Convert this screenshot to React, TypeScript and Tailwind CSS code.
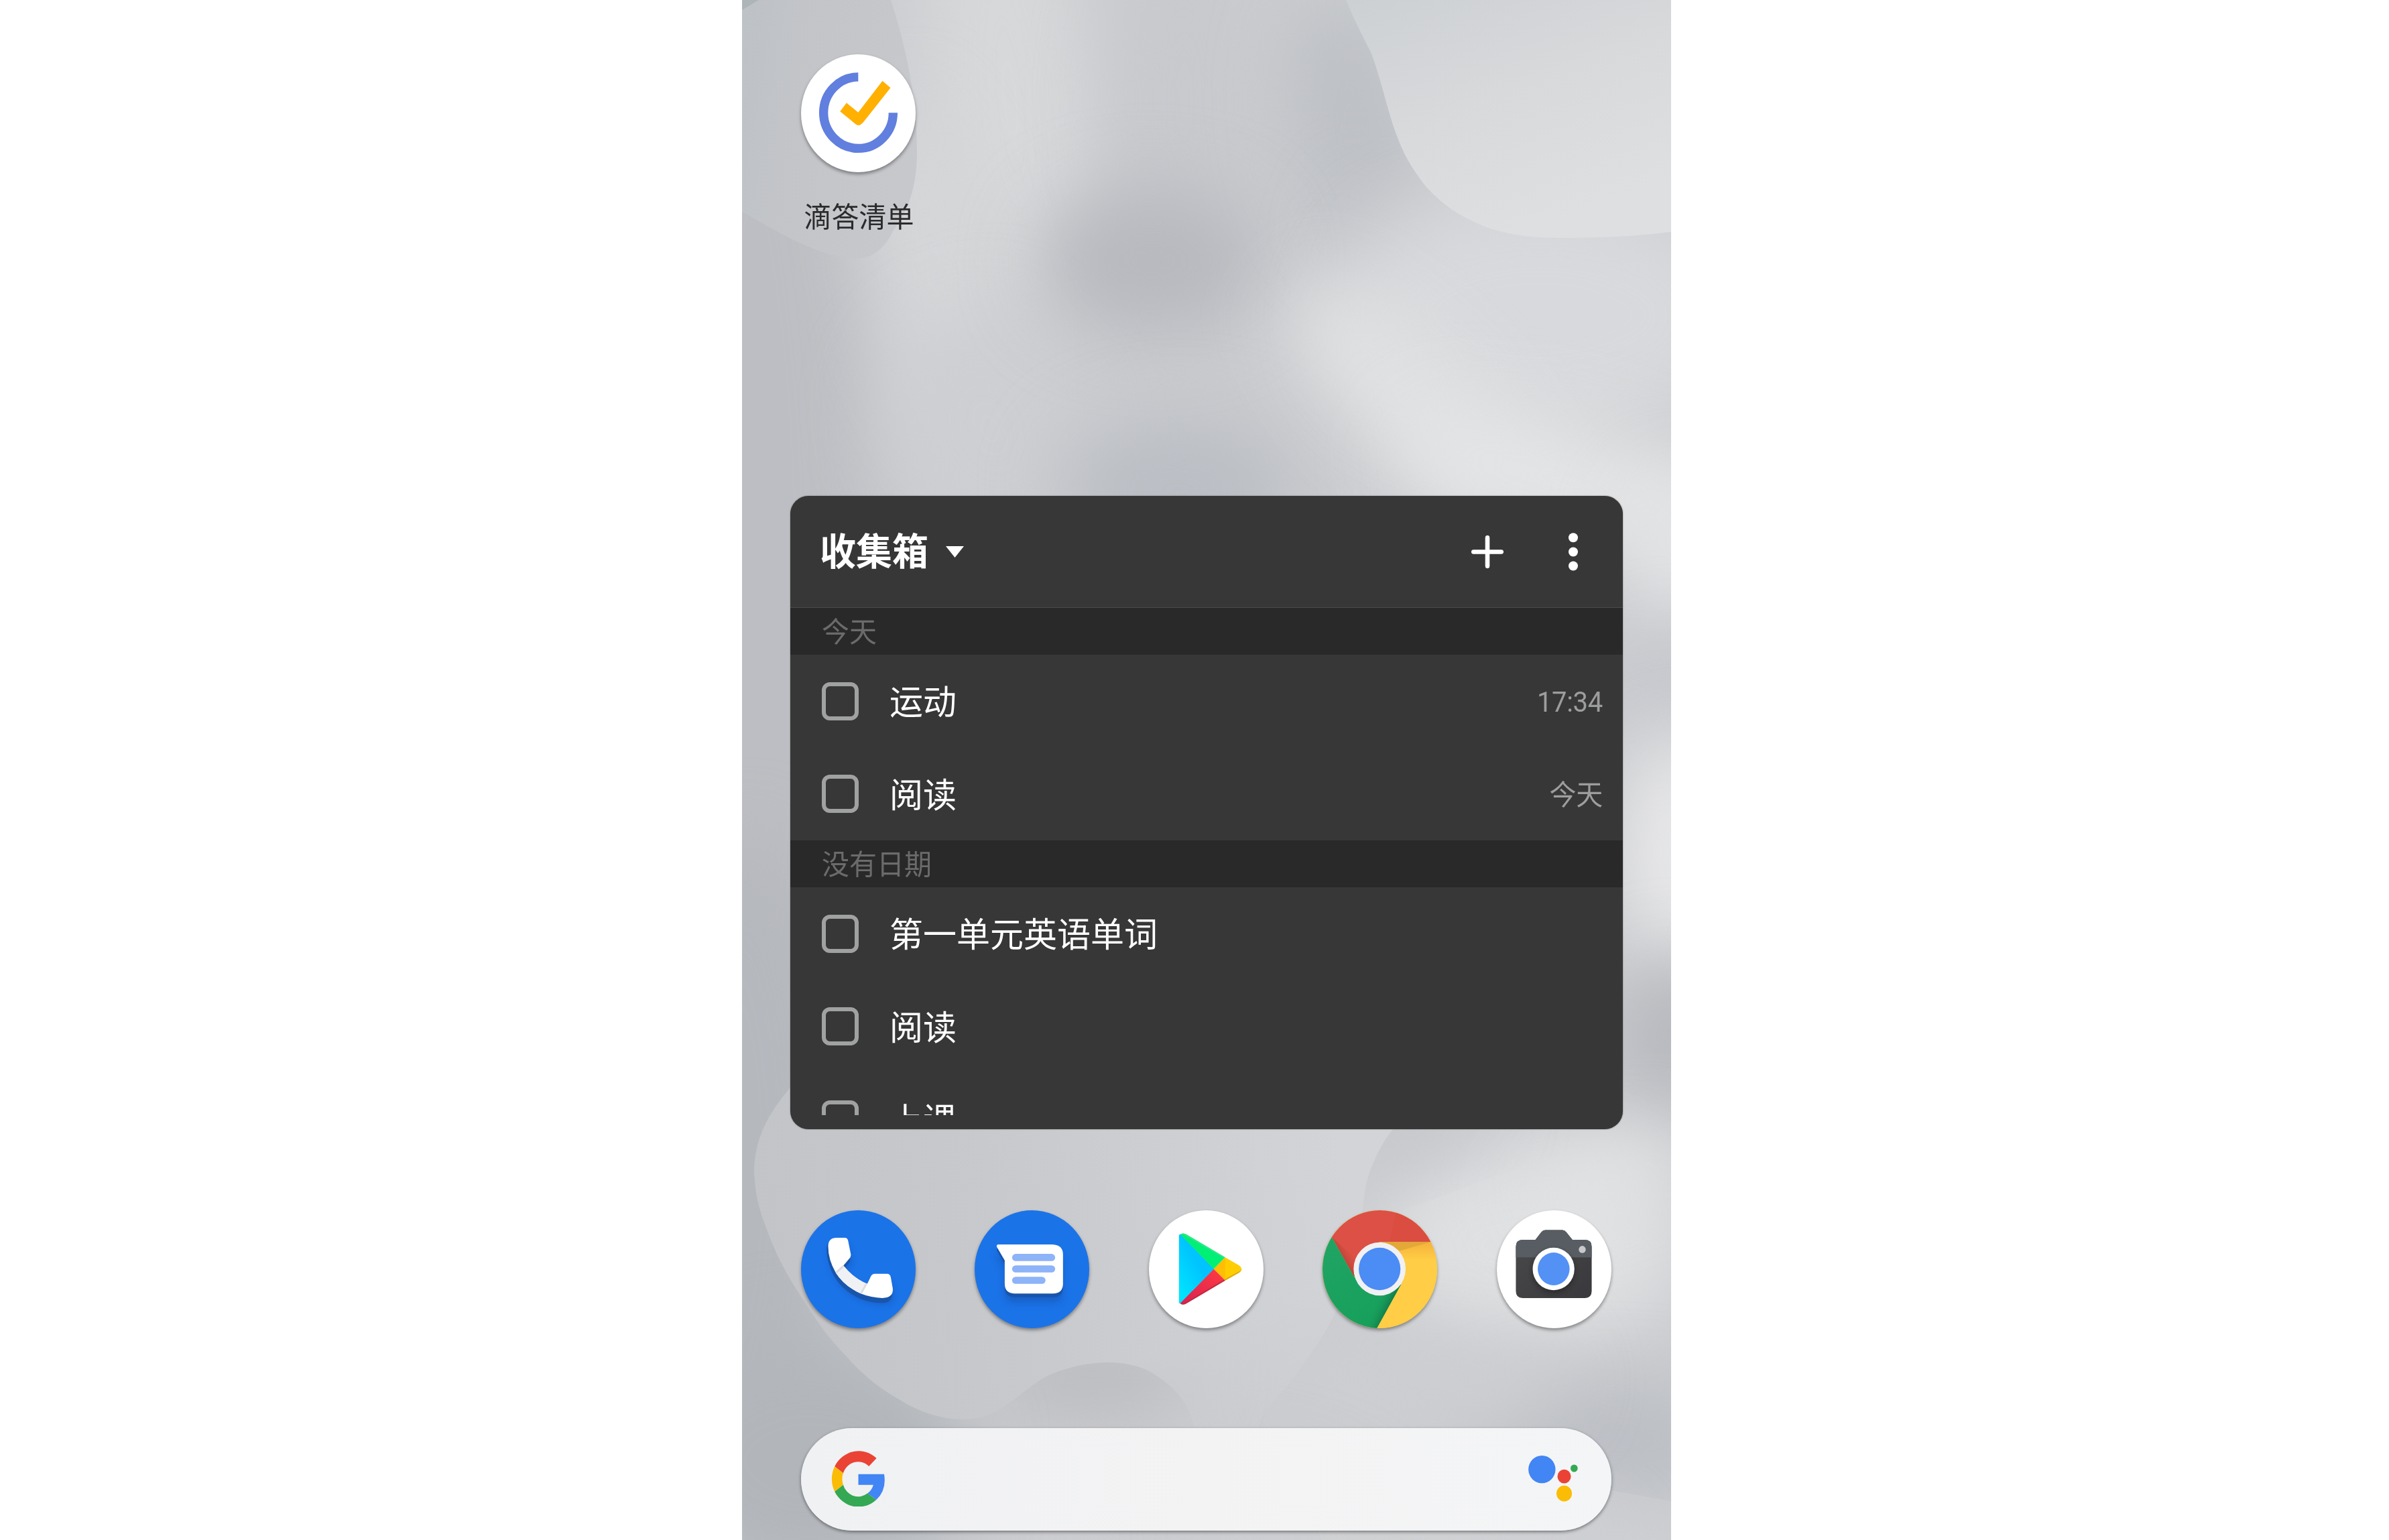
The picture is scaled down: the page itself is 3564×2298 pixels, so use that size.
import type { ReactNode } from "react";

const FONT = "font-['Roboto','Noto_Sans_CJK_SC',sans-serif]";

type Blob = [cx: number, cy: number, rx: number, ry: number, color: string, rotate?: number, opacity?: number];

const BLOBS: Blob[] = [
  [20, 900, 190, 900, "#bdbec3"],
  [0, 1750, 160, 500, "#b5b8bd"],
  [400, 150, 130, 330, "#d7d8da", -6],
  [290, 400, 80, 260, "#d6d7d9", -12],
  [370, 640, 150, 180, "#cdcfd2", -20],
  [660, 150, 110, 260, "#c8c9cd"],
  [910, 190, 90, 200, "#bdc0c5", -8],
  [1040, 370, 160, 50, "#cccdd1", 20],
  [610, 390, 170, 110, "#b8b9bf"],
  [650, 730, 180, 110, "#bbbec4"],
  [1190, 470, 300, 180, "#d8d9dc"],
  [1000, 600, 240, 80, "#e1e2e3", 44],
  [1230, 720, 260, 90, "#e4e5e6", 14],
  [1400, 820, 80, 110, "#e3e4e6"],
  [1400, 1030, 80, 80, "#c5c7cd"],
  [1400, 1270, 90, 180, "#e8e8e9"],
  [1395, 1550, 90, 120, "#b6b8bd"],
  [1180, 1860, 230, 150, "#dfe0e2"],
  [1290, 1760, 130, 60, "#e2e3e4", -20],
  [1000, 1690, 120, 40, "#c4c6ca", -20],
  [1300, 2150, 220, 80, "#bbbec4"],
  [1030, 2060, 200, 70, "#cdced1"],
  [620, 2260, 300, 90, "#cbccd0"],
  [520, 2050, 150, 60, "#b9babf"],
  [100, 2180, 240, 190, "#b2b6bb"],
  [1000, 2290, 330, 40, "#d0d1d4"],
];

function Wallpaper() {
  return (
    <svg className="absolute inset-0 h-full w-full" viewBox="0 0 1386 2298" preserveAspectRatio="none" aria-hidden="true">
      <defs>
        <filter id="soft" x="-80%" y="-80%" width="260%" height="260%" colorInterpolationFilters="sRGB">
          <feGaussianBlur stdDeviation="54" />
        </filter>
        <linearGradient id="leafTopLeft" x1="0" y1="0" x2="1" y2="0.25">
          <stop offset="0" stopColor="#bdc2c6" />
          <stop offset="0.5" stopColor="#c4c5c9" />
          <stop offset="1" stopColor="#c6c8cc" />
        </linearGradient>
        <linearGradient id="leafTopRight" x1="0" y1="0" x2="0.5" y2="1">
          <stop offset="0" stopColor="#cdd0d3" />
          <stop offset="0.5" stopColor="#d7d9db" />
          <stop offset="1" stopColor="#dedfe1" />
        </linearGradient>
        <linearGradient id="leafBottom" gradientUnits="userSpaceOnUse" x1="40" y1="1900" x2="900" y2="1750">
          <stop offset="0" stopColor="#c3c4c8" />
          <stop offset="0.4" stopColor="#c7c9cc" />
          <stop offset="1" stopColor="#d2d4d7" />
        </linearGradient>
        <linearGradient id="leafFade" gradientUnits="userSpaceOnUse" x1="700" y1="1980" x2="760" y2="2130">
          <stop offset="0" stopColor="#fff" />
          <stop offset="1" stopColor="#fff" stopOpacity="0.3" />
        </linearGradient>
        <mask id="leafMask">
          <rect width="1386" height="2298" fill="url(#leafFade)" />
        </mask>
      </defs>
      <rect width="1386" height="2298" fill="#cbcdd0" />
      {BLOBS.map(([cx, cy, rx, ry, color, rotate = 0, opacity = 1], i) => (
        <ellipse
          key={i}
          cx={cx}
          cy={cy}
          rx={rx}
          ry={ry}
          fill={color}
          opacity={opacity}
          filter="url(#soft)"
          transform={`rotate(${rotate} ${cx} ${cy})`}
        />
      ))}
      <path
        d="M0 0H222C245 70 261 150 261 226C261 270 252 310 225 345C210 378 185 388 165 386C110 380 60 350 0 316Z"
        fill="url(#leafTopLeft)"
      />
      <path d="M0 0H25L0 15Z" fill="#aeb5b9" />
      <path
        d="M901 0C917 38 928 58 939 80C948 105 955 130 962 156C970 185 978 208 989 231C998 248 1008 263 1020 278C1040 300 1060 315 1082 326C1108 340 1130 346 1154 350C1178 354 1198 355 1216 355C1280 355 1330 353 1386 346V0Z"
        fill="url(#leafTopRight)"
      />
      <path
        d="M72 1623C40 1660 18 1700 18 1749C20 1790 28 1810 36 1832C50 1872 68 1905 91 1939C112 1972 130 1998 154 2022C178 2050 205 2072 234 2088C262 2106 298 2118 328 2118C350 2118 364 2114 377 2107C402 2094 420 2076 439 2063C456 2051 474 2045 493 2040C512 2035 530 2033 548 2033C570 2033 592 2038 609 2047C628 2058 642 2070 654 2084C665 2100 672 2114 676 2135L760 2135L792 2092C812 2070 828 2050 841 2030C860 2004 876 1980 886 1956C908 1900 920 1850 926 1807C928 1780 930 1770 935 1753C944 1726 956 1704 971 1685V1500H100Z"
        fill="url(#leafBottom)"
        mask="url(#leafMask)"
      />
      <path d="M776 2131C815 2180 845 2235 864 2298H1386V2240Z" fill="#d4d5d8" opacity="0.35" />
    </svg>
  );
}

function AppIcon({ viewBox, className, children }: { viewBox: string; className: string; children: ReactNode }) {
  return (
    <div
      className={`h-[176px] w-[171px] shrink-0 overflow-hidden rounded-[50%] shadow-[0_3px_5px_rgba(0,0,0,0.38)] ${className}`}
    >
      <svg className="h-full w-full" viewBox={viewBox} preserveAspectRatio="none" aria-hidden="true">
        {children}
      </svg>
    </div>
  );
}

function TickIcon() {
  return (
    <AppIcon viewBox="106 65 511 527" className="bg-white">
      <path d="M361 166.500A155 159.500 0 1 0 516.500 326" fill="none" stroke="#617fde" strokeWidth="40" />
      <path d="M469 184L505 215L384 368Q371 382 363 382Q353 382 342 371L280 320L309 282L361 325Z" fill="#ffb000" />
    </AppIcon>
  );
}

const HANDSET =
  "M198 240Q198 202 236 202L272 202Q285 202 287 216L299 275Q301 286 292 295L266 326Q310 382 372 408L388 375Q394 363 406 363L460 363Q474 363 477 378L486 428Q490 470 440 471Q390 470 345 452Q270 418 232 358Q198 300 198 240Z";

function PhoneIcon() {
  return (
    <AppIcon viewBox="77 79 511 527" className="bg-[#1b73e8]">
      <defs>
        <filter id="phoneBlur" x="-30%" y="-30%" width="160%" height="160%">
          <feGaussianBlur stdDeviation="14" />
        </filter>
      </defs>
      <path d={HANDSET} transform="translate(4 30)" fill="#174ea6" opacity="0.45" filter="url(#phoneBlur)" />
      <path d={HANDSET} transform="translate(-7 12)" fill="#1855ab" />
      <path d={HANDSET} transform="translate(-4 22)" fill="#1855ab" />
      <path d={HANDSET} fill="#fff" />
      <path d="M266 326Q310 382 372 408L345 452Q270 418 232 358Z" fill="#f0f1f4" />
      <path d="M266 328L234 357M368 408L345 450" stroke="#dcdde0" strokeWidth="9" fill="none" />
    </AppIcon>
  );
}

const BUBBLE =
  "M962 232H1203Q1250 234 1250 277V410Q1248 451 1205 451H1032Q990 449 990 408V303L955 243Q952 232 962 232Z";

function MessagesIcon() {
  return (
    <AppIcon viewBox="856 79 511 527" className="bg-[#1b73e8]">
      <defs>
        <filter id="msgBlur" x="-30%" y="-30%" width="160%" height="160%">
          <feGaussianBlur stdDeviation="16" />
        </filter>
      </defs>
      <path d={BUBBLE} transform="translate(0 40)" fill="#174ea6" opacity="0.5" filter="url(#msgBlur)" />
      <path d={BUBBLE} transform="translate(0 16)" fill="#1855ab" />
      <path d={BUBBLE} fill="#fff" />
      <rect x="1023" y="274" width="192" height="32" rx="16" fill="#8db3f8" />
      <rect x="1023" y="325" width="192" height="32" rx="16" fill="#8db3f8" />
      <rect x="1023" y="376" width="149" height="32" rx="16" fill="#8db3f8" />
    </AppIcon>
  );
}

function PlayIcon() {
  return (
    <AppIcon viewBox="73 79 511 527" className="bg-white">
      <defs>
        <linearGradient id="playBlue" x1="0.7" y1="0.2" x2="0.1" y2="0.9">
          <stop offset="0" stopColor="#00c2ff" />
          <stop offset="0.3" stopColor="#00c4ff" />
          <stop offset="1" stopColor="#00e3ff" />
        </linearGradient>
        <linearGradient id="playRed" x1="1" y1="0" x2="0" y2="1">
          <stop offset="0" stopColor="#ff3b44" />
          <stop offset="1" stopColor="#d9204f" />
        </linearGradient>
      </defs>
      <path d="M207 192Q209 184 216 187L364 342L216 493Q209 498 207 492Z" fill="url(#playBlue)" />
      <path d="M213 187Q224 178 240 187L413 289L362 342Z" fill="#00f076" />
      <path d="M213 187Q224 178 240 187L413 289L408 293L238 193Q224 184 213 187Z" fill="#33e58c" />
      <path d="M413 289L470 322Q486 331 486 342Q486 351 474 358L413 393L362 342Z" fill="#ffcd00" />
      <path d="M413 289V393L362 342Z" fill="#ffbd05" />
      <path d="M413 393L240 495Q224 504 212 495L362 342Z" fill="url(#playRed)" />
      <path d="M413 393L240 495Q224 504 212 495Q226 498 238 490L408 389Z" fill="#c02a43" />
      <path d="M413 393L474 358Q486 351 486 342Q484 350 472 354L408 389Z" fill="#d9a611" />
    </AppIcon>
  );
}

function ChromeIcon() {
  return (
    <AppIcon viewBox="850 79 511 527" className="bg-[#ffcd46]">
      <defs>
        <linearGradient id="chromeRedShade" gradientUnits="userSpaceOnUse" x1="935" y1="295" x2="990" y2="262">
          <stop offset="0" stopColor="#b03f33" stopOpacity="0.9" />
          <stop offset="1" stopColor="#dd5144" stopOpacity="0" />
        </linearGradient>
        <linearGradient id="chromeYellowShade" gradientUnits="userSpaceOnUse" x1="0" y1="220" x2="0" y2="300">
          <stop offset="0" stopColor="#f5b13b" />
          <stop offset="1" stopColor="#ffcd46" />
        </linearGradient>
        <linearGradient id="chromeGreenShade" gradientUnits="userSpaceOnUse" x1="1142" y1="515" x2="1088" y2="488">
          <stop offset="0" stopColor="#12804a" />
          <stop offset="1" stopColor="#19a15f" stopOpacity="0" />
        </linearGradient>
        <linearGradient id="chromeGreen" x1="0" y1="0" x2="0.3" y2="1">
          <stop offset="0" stopColor="#23a566" />
          <stop offset="1" stopColor="#17a05c" />
        </linearGradient>
      </defs>
      <rect x="850" y="79" width="511" height="527" fill="#ffcd46" />
      <path d="M1100 220H1361V300H1190Z" fill="url(#chromeYellowShade)" />
      <path d="M1110 220H1334L1195 260Z" fill="#dda538" opacity="0.8" />
      <path d="M892 200L850 130V79H1361V220H1105L1105 341L990 375Z" fill="#dc5045" />
      <path d="M1180 79H1361V220H1150Z" fill="#d94b3f" opacity="0.7" />
      <path d="M892 200L1050 341L990 375Z" fill="url(#chromeRedShade)" />
      <path d="M892 200L990 375L1060 430L1200 410L1092 606H850V130Z" fill="url(#chromeGreen)" />
      <path d="M1200 410L1092 606H1050L1110 440Z" fill="url(#chromeGreenShade)" />
      <ellipse cx="1104.500" cy="341" rx="116" ry="119" fill="#f1f1f3" />
      <ellipse cx="1104.500" cy="341" rx="93" ry="95" fill="#4b8cf5" />
    </AppIcon>
  );
}

function CameraIcon() {
  return (
    <AppIcon viewBox="98 79 511 527" className="bg-white">
      <defs>
        <clipPath id="cameraTop">
          <rect x="98" y="79" width="511" height="210" />
        </clipPath>
        <linearGradient id="cameraBody" x1="0" y1="0" x2="1" y2="1">
          <stop offset="0" stopColor="#4a4a4b" />
          <stop offset="1" stopColor="#39393d" />
        </linearGradient>
        <filter id="cameraBlur" x="-30%" y="-30%" width="160%" height="160%">
          <feGaussianBlur stdDeviation="9" />
        </filter>
      </defs>
      <path
        d="M183 243Q183 211 213 211H270L296 177Q304 167 314 167H390Q400 167 408 177L435 211H491Q521 211 521 243V440Q521 471 491 471H213Q183 471 183 440Z"
        fill="url(#cameraBody)"
      />
      <path
        d="M183 243Q183 211 213 211H270L296 177Q304 167 314 167H390Q400 167 408 177L435 211H491Q521 211 521 243V440H183Z"
        fill="#575d62"
        clipPath="url(#cameraTop)"
      />
      <ellipse cx="351" cy="353" rx="95" ry="97" fill="#222" opacity="0.55" filter="url(#cameraBlur)" />
      <ellipse cx="351" cy="341" rx="93" ry="95" fill="#fff" />
      <ellipse cx="351.500" cy="341" rx="71" ry="73" fill="#5391f5" />
      <ellipse cx="479" cy="254" rx="15.500" ry="16" fill="#c8c9cd" />
    </AppIcon>
  );
}

function GoogleLogo() {
  return (
    <svg className="-mt-[3px] h-[83px] w-[80px]" viewBox="211 165 239 249" preserveAspectRatio="none" aria-hidden="true">
      <path d="M226.500 235A119 124 0 0 1 413 198L379 234A70 75 0 0 0 264.500 265Z" fill="#ea4335" />
      <path d="M226.500 235A119 124 0 0 0 226.500 347L264.500 317A70 75 0 0 1 264.500 265Z" fill="#fbbc05" />
      <path d="M226.500 347A119 124 0 0 0 412 384L373 355A70 75 0 0 1 264.500 317Z" fill="#34a853" />
      <path d="M332 269H447Q459 340 412 384L373 355Q392 341 399 317H332Z" fill="#4285f4" />
    </svg>
  );
}

function AssistantLogo() {
  return (
    <svg className="-mt-[2px] h-[69px] w-[74px]" viewBox="241 185 222 207" preserveAspectRatio="none" aria-hidden="true">
      <ellipse cx="302" cy="247" rx="60.500" ry="62" fill="#4285f4" />
      <ellipse cx="401.500" cy="278.500" rx="30" ry="31" fill="#ea4335" />
      <ellipse cx="446" cy="242" rx="16" ry="16.500" fill="#34a853" />
      <ellipse cx="401.500" cy="355" rx="34.500" ry="35.500" fill="#fbbc05" />
    </svg>
  );
}

function SectionHeader({ children }: { children: ReactNode }) {
  return (
    <div className="flex h-[70px] shrink-0 items-center bg-[#292929] pt-[4px] pl-[47px] text-[41px] leading-none text-[#6b6b6b]">
      <span className="block scale-y-[1.03]">{children}</span>
    </div>
  );
}

function TaskRow({ title, due }: { title: string; due?: string }) {
  return (
    <div className="flex h-[138.5px] shrink-0 items-center pr-[30px] pl-[47px]">
      <span className="h-[57px] w-[55px] shrink-0 rounded-[12px] border-[6px] border-[#a0a2a1]" />
      <span className="mt-[4px] ml-[46px] block scale-y-[1.03] text-[50px] leading-none text-white">{title}</span>
      {due && (
        <span className="mt-[4px] ml-auto block scale-y-[1.06] text-[40px] leading-none tracking-[-0.3px] text-[#9c9e9d]">
          {due}
        </span>
      )}
    </div>
  );
}

function TaskWidget() {
  return (
    <section className="ml-[72px] flex h-[945px] w-[1242px] flex-col overflow-hidden rounded-[27px] bg-[#373737] shadow-[0_0_2px_rgba(60,70,65,0.7)]">
      <header className="flex h-[167px] shrink-0 items-center border-b border-[#4b4b4b] pr-[67px] pl-[44px]">
        <h1 className="mt-[2px] block scale-y-[1.03] text-[54px] leading-none font-bold text-white">收集箱</h1>
        <svg className="ml-[26px] h-[17px] w-[27px]" viewBox="0 0 27 17" aria-hidden="true">
          <path d="M0 0H27L13.500 17Z" fill="#fff" />
        </svg>
        <svg className="ml-auto h-[49px] w-[48px]" viewBox="0 0 48 49" aria-hidden="true">
          <path d="M3.200 24.500H44.800M24 3.200V45.800" stroke="#fff" strokeWidth="6.600" strokeLinecap="round" />
        </svg>
        <svg className="ml-[97px] h-[57px] w-[14px]" viewBox="0 0 14 57" aria-hidden="true">
          <circle cx="7" cy="7.300" r="7" fill="#fff" />
          <circle cx="7" cy="28.500" r="7" fill="#fff" />
          <circle cx="7" cy="49.500" r="7" fill="#fff" />
        </svg>
      </header>
      <div className="flex h-[757px] flex-col overflow-hidden">
        <SectionHeader>今天</SectionHeader>
        <TaskRow title="运动" due="17:34" />
        <TaskRow title="阅读" due="今天" />
        <SectionHeader>没有日期</SectionHeader>
        <TaskRow title="第一单元英语单词" />
        <TaskRow title="阅读" />
        <TaskRow title="上课" />
      </div>
    </section>
  );
}

export default function App() {
  return (
    <main className={`flex h-[2298px] w-[3564px] overflow-hidden bg-white pl-[1107px] ${FONT}`}>
      <div className="relative h-[2298px] w-[1386px] overflow-hidden">
        <Wallpaper />
        <div className="relative flex h-full flex-col">
          <div className="mt-[81px] ml-[88px] flex w-[171px] flex-col items-center">
            <TickIcon />
            <span className="mt-[48px] ml-[2px] block h-[41px] scale-y-[1.03] text-[41px] leading-none whitespace-nowrap text-[#2b2b2c]">
              滴答清单
            </span>
          </div>
          <div className="mt-[394px]">
            <TaskWidget />
          </div>
          <nav className="mt-[121px] ml-[88px] flex w-[1208.5px] justify-between">
            <PhoneIcon />
            <MessagesIcon />
            <PlayIcon />
            <ChromeIcon />
            <CameraIcon />
          </nav>
          <div className="mt-[149px] ml-[87.5px] flex h-[153px] w-[1209px] items-center justify-between rounded-[76px] bg-[linear-gradient(90deg,#f0f1f3,#f3f3f4_50%,#f4f5f6)] pr-[50px] pl-[45.5px] shadow-[0_2px_5px_rgba(0,0,0,0.45)]">
            <GoogleLogo />
            <AssistantLogo />
          </div>
        </div>
      </div>
    </main>
  );
}
